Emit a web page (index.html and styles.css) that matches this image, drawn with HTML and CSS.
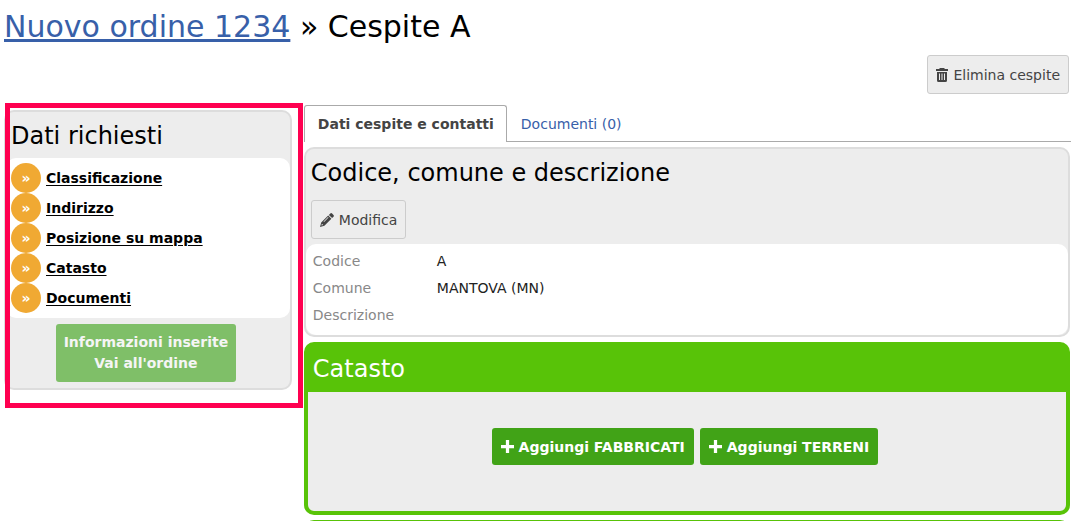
FILE: index.html
```html
<!DOCTYPE html>
<html lang="it">
<head>
<meta charset="utf-8">
<title>Cespite A</title>
<link rel="stylesheet" href="styles.css">
</head>
<body>
<header class="page-head">
  <h1 class="title"><a class="title-link" href="#ordine">Nuovo ordine 1234</a> » Cespite A</h1>
  <div class="toolbar">
    <button class="btn" type="button">
      <svg class="icon-trash" viewBox="0 0 12 14" aria-hidden="true"><path fill-rule="evenodd" d="M4 0h4l1 1h3v2H0V1h3zM1 4h10v8.500q0 1.500-1.500 1.500h-7Q1 14 1 12.500zM3 5.500V12h1V5.500zM5.500 5.500V12h1V5.500zM8 5.500V12h1V5.500z"/></svg>
      <span>Elimina cespite</span>
    </button>
  </div>
</header>
<div class="columns">
  <aside class="sidebar">
    <section class="panel">
      <h2 class="panel-title side-title">Dati richiesti</h2>
      <ul class="steps">
        <li class="step"><span class="dot">»</span><a class="step-link" href="#classificazione">Classificazione</a></li>
        <li class="step"><span class="dot">»</span><a class="step-link" href="#indirizzo">Indirizzo</a></li>
        <li class="step"><span class="dot">»</span><a class="step-link" href="#posizione">Posizione su mappa</a></li>
        <li class="step"><span class="dot">»</span><a class="step-link" href="#catasto">Catasto</a></li>
        <li class="step"><span class="dot">»</span><a class="step-link" href="#documenti">Documenti</a></li>
      </ul>
      <div class="side-foot">
        <button class="btn-done" type="button">Informazioni inserite<br>Vai all'ordine</button>
      </div>
    </section>
    <div class="highlight"></div>
  </aside>
  <main class="main">
    <nav class="tabs">
      <a class="tab tab-active" href="#dati">Dati cespite e contatti</a>
      <a class="tab" href="#documenti">Documenti (0)</a>
    </nav>
    <section class="panel">
      <div class="panel-head">
        <h2 class="panel-title">Codice, comune e descrizione</h2>
        <button class="btn" type="button">
          <svg class="icon" viewBox="0 0 14 14" aria-hidden="true"><path fill-rule="evenodd" d="M10.300.5q.9-.8 1.800 0l1.400 1.400q.8.900 0 1.800l-1.400 1.400-3.200-3.200zM8.200 2.600l3.200 3.200-7 7L0 14l1.200-4.400zM1.900 10.800l-.5 1.800 1.800-.5zM4 9l4.500-4.500-.5-.5L3.500 8.500z"/></svg>
          <span>Modifica</span>
        </button>
      </div>
      <dl class="details">
        <dt>Codice</dt><dd>A</dd>
        <dt>Comune</dt><dd>MANTOVA (MN)</dd>
        <dt>Descrizione</dt><dd></dd>
      </dl>
    </section>
    <section class="green" id="catasto">
      <h2 class="green-title">Catasto</h2>
      <div class="green-body">
        <button class="btn-add" type="button"><svg class="icon-plus" viewBox="0 0 12 12" aria-hidden="true"><path d="M4.500 0h3v4.500H12v3H7.500V12h-3V7.500H0v-3h4.500z"/></svg><span>Aggiungi FABBRICATI</span></button>
        <button class="btn-add" type="button"><svg class="icon-plus" viewBox="0 0 12 12" aria-hidden="true"><path d="M4.500 0h3v4.500H12v3H7.500V12h-3V7.500H0v-3h4.500z"/></svg><span>Aggiungi TERRENI</span></button>
      </div>
    </section>
    <section class="green next"></section>
  </main>
</div>
</body>
</html>
```
FILE: styles.css
```css
* { box-sizing: border-box; }
html { overflow: hidden; }
body {
  margin: 0;
  padding: 9px 5px 0 4px;
  background: #fff;
  color: #000;
  font-family: Verdana, "DejaVu Sans", sans-serif;
  font-size: 14px;
  line-height: 20px;
}
h1, h2, ul, dl, dd { margin: 0; padding: 0; font-weight: normal; }
button { font: inherit; cursor: pointer; }

.title { font-size: 30px; line-height: 36px; }
.title-link { color: #3860a9; }
.toolbar { display: flex; justify-content: flex-end; padding: 10px 1px 11px 0; }

.btn {
  display: inline-flex;
  align-items: center;
  gap: 5px;
  height: 39px;
  padding: 0 8px;
  border: 1px solid #ccc;
  border-radius: 3px;
  background: #ededed;
  color: #444;
}
.icon { width: 14px; height: 14px; fill: #444; }
.icon-trash { width: 12px; height: 14px; fill: #444; }

.columns {
  display: grid;
  grid-template-columns: 27% 1fr;
  column-gap: 12px;
  align-items: start;
}
.sidebar { position: relative; padding-top: 5px; }
.highlight {
  position: absolute;
  inset: -2px -11px -18px 1px;
  border: 5px solid #ff0050;
  pointer-events: none;
}

.panel { border: 2px solid #ddd; border-radius: 10px; background: #ededed; }
.panel-title { font-size: 24px; line-height: 30px; }
.side-title { padding: 9px 5px 7px; }
.steps { padding: 5px; border-radius: 10px; background: #fff; list-style: none; }
.step { display: flex; align-items: center; gap: 5px; height: 30px; }
.dot {
  width: 30px;
  height: 30px;
  border-radius: 50%;
  background: #f0a933;
  color: #fff;
  font-weight: bold;
  line-height: 30px;
  text-align: center;
}
.step-link { color: #000; font-weight: bold; text-underline-offset: 2px; }
.side-foot { display: flex; justify-content: center; padding: 6px 8px 6px 4px; }
.btn-done {
  padding: 8px;
  border: 0;
  border-radius: 3px;
  background: #7fbf68;
  color: #f5f5f5;
  font-weight: bold;
  line-height: 21px;
}

.tabs { display: flex; margin-right: -1px; border-bottom: 1px solid #aaa; }
.tab {
  padding: 8px 14px 7px;
  border-top: 1px solid transparent;
  color: #3860a9;
  text-decoration: none;
}
.tab-active {
  margin-bottom: -1px;
  padding: 8px 12px 8px 13px;
  border: 1px solid #aaa;
  border-bottom: 0;
  border-radius: 3px 3px 0 0;
  background: #fff;
  color: #444;
  font-weight: bold;
}
.main .panel { margin-top: 5px; }
.panel-head { padding: 9px 5px 5px; }
.panel-head .btn { margin-top: 12px; }
.details {
  display: grid;
  grid-template-columns: 124px 1fr;
  grid-auto-rows: 27px;
  padding: 4px 7px 6px;
  border-radius: 10px;
  background: #fff;
  line-height: 27px;
}
.details dt { color: #888; }
.details dd { color: #222; }

.green { margin-top: 5px; border: 4px solid #58c308; border-radius: 10px; background: #ededed; }
.green-title {
  padding: 8px 5px;
  background: #58c308;
  color: #fff;
  font-size: 24px;
  line-height: 30px;
}
.green-body { display: flex; flex-wrap: wrap; justify-content: center; gap: 6px; padding: 36px 4px 46px 0; }
.btn-add {
  display: inline-flex;
  align-items: center;
  gap: 5px;
  height: 37px;
  padding: 0 9px;
  border: 0;
  border-radius: 3px;
  background: #41a317;
  color: #fff;
  font-weight: bold;
}
.icon-plus { width: 13px; height: 13px; fill: #fff; }
.next { min-height: 40px; }
```
